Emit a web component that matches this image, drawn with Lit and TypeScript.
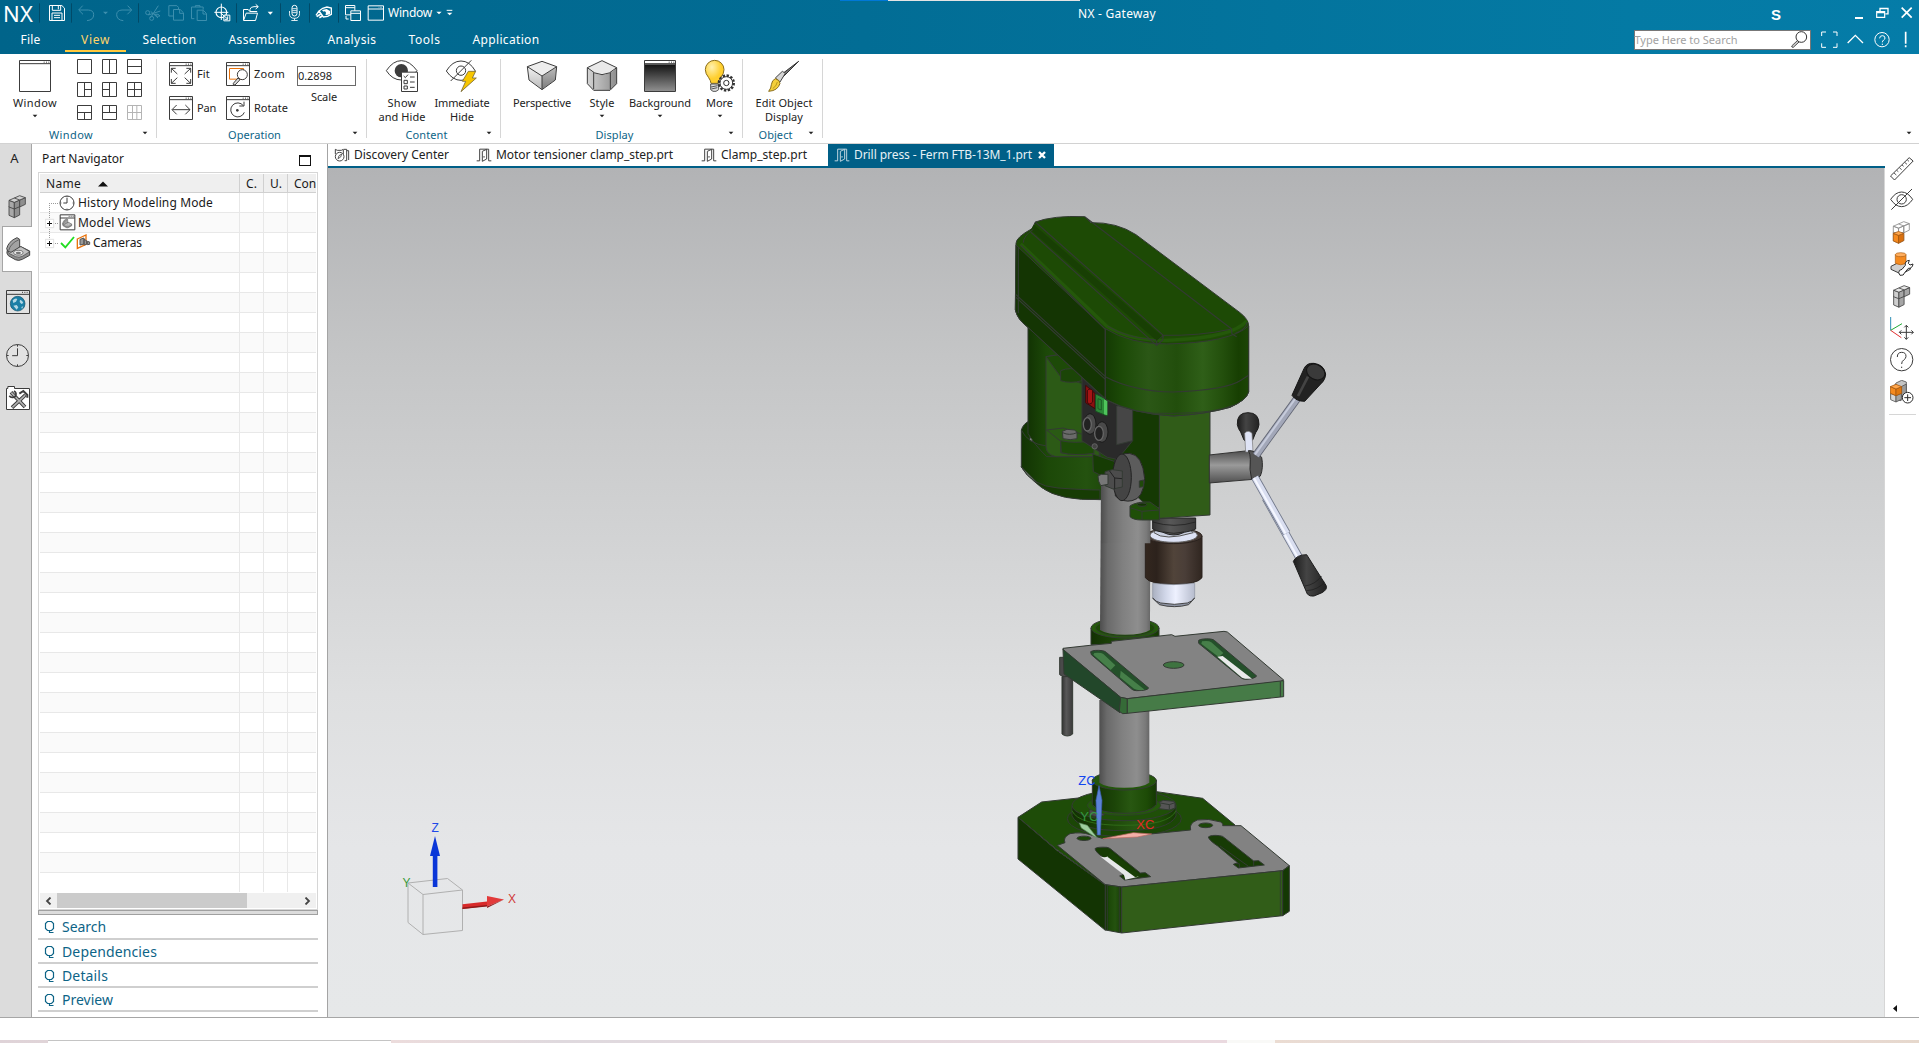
import { LitElement, html, svg, css, nothing } from "lit";
import { customElement, property } from "lit/decorators.js";

/* Single line of text whose tracking is tuned so that it fills a given width. */
@customElement("ui-text")
class UiText extends LitElement {
  @property() text = "";
  @property({ type: Number }) w = 0;
  static styles = css`
    :host { display: inline-block; white-space: pre; line-height: 1; flex: none; }
    .run { display: inline-block; }
  `;
  render() {
    return html`<span class="run">${this.text}</span>`;
  }
  updated() {
    const run = this.renderRoot.querySelector(".run") as HTMLElement;
    run.style.letterSpacing = "0px";
    if (!this.w) return;
    const gap = (this.w - run.getBoundingClientRect().width) / this.text.length;
    run.style.letterSpacing = `${gap.toFixed(3)}px`;
  }
}

const t = (text: string, w = 0) => html`<ui-text .text=${text} .w=${w}></ui-text>`;

/* Icons are drawn on a grid of three units per pixel. */
const icon = (x: number, y: number, w: number, h: number, body: unknown) =>
  html`<svg width=${w / 3} height=${h / 3} viewBox="${x} ${y} ${w} ${h}" fill="none">${body}</svg>`;

const ln = (d: string, c = "#3c3c3c", w = 3, f = "none") =>
  svg`<path d=${d} stroke=${c} stroke-width=${w} fill=${f} />`;

const down = (c: string, w = 14) =>
  icon(0, 0, 18, 12, svg`<path d="M${9 - w / 2} 2h${w}l${-w / 2} 8z" fill=${c} />`);

const frame = (x: number, y: number, s: number) => svg`
  <path d="M${x + 1.5} ${y + 1.5}h${s - 3}v${s - 3}h${3 - s}z M${x} ${y + 11}h${s}" stroke="#3c3c3c" stroke-width="3" fill="#fff" />
  <path d="M${x + s - 22} ${y + 6.5}h18" stroke="#3c3c3c" stroke-width="3" stroke-dasharray="3 4" />`;

/* ---------- quick access bar ---------- */
const W = "#ffffff";
const D = "#3d8fae";
const quick: { x: number; w: number; body: unknown }[] = [
  { x: 114, w: 9, body: ln("M118.500 10v58", "#014a68") },
  { x: 144, w: 54, body: svg`${ln("M148.500 16.500h37l8 8v37h-45z", W)}${ln("M157 17v14h25v-14 M175 18v10", W)}${ln("M156 61v-22h30v22 M162 46h18 M162 53h18", W)}` },
  { x: 210, w: 9, body: ln("M214.500 10v58", "#014a68") },
  { x: 231, w: 54, body: svg`${ln("M248 17l-12 13l13 13 M237 30h28q16 1 16 14q0 16-20 18", D)}` },
  { x: 306, w: 21, body: svg`<path d="M309 35h15l-7.500 8z" fill=${D} />` },
  { x: 345, w: 54, body: ln("M383 17l12 13l-13 13 M394 30h-28q-16 1-16 14q0 16 20 18", D) },
  { x: 411, w: 9, body: ln("M415.500 10v58", "#014a68") },
  { x: 432, w: 54, body: svg`${ln("M451 54l24-37 M481 33l-36 12 M452 34l22 20", D)}<circle cx="455" cy="55" r="6" stroke=${D} stroke-width="3" /><circle cx="443" cy="38" r="6" stroke=${D} stroke-width="3" /><path d="M463 43q14-3 17 5q-8 4-17-5" stroke=${D} stroke-width="3" />` },
  { x: 501, w: 54, body: ln("M520 48h-13.500v-31h24l5 5v5 M520.500 28.500h20l10 10v22h-30z M539 29v11h11", D) },
  { x: 570, w: 54, body: ln("M583 56h-8.500v-35h35v8 M586 21v-4h14v4 M591.500 30.500h18l10 10v21h-28z M609 31v11h10", D) },
  { x: 639, w: 54, body: svg`<circle cx="664" cy="37" r="16" stroke=${W} stroke-width="3.500" />${ln("M664 11v49 M643 37h42", W)}${ln("M671.500 45.500h18v17h-18z", W, 3, "#04688e")}${ln("M661 38l22 19 M683 49v9h-9", W)}` },
  { x: 705, w: 9, body: ln("M709.500 10v58", "#014a68") },
  { x: 726, w: 54, body: ln("M730.500 61.500v-33h14l5 6h22 M730.500 61.500h36l6-22h-34l-7 20 M750 34v-6q2-8 12-8h12 M767 13l8 7l-8 7", W) },
  { x: 801, w: 21, body: svg`<path d="M803 35h16l-8 9z" fill="#fff" />` },
  { x: 837, w: 9, body: ln("M841.500 10v58", "#014a68") },
  { x: 861, w: 45, body: svg`<rect x="876" y="16" width="15" height="32" rx="7.500" stroke="#fff" stroke-width="3" />${ln("M868.500 33v8q0 14 15 14t15-14v-8 M883.500 55v6 M874 61.500h19 M877 26h13 M877 32h13 M877 38h13", W, 2.6)}` },
  { x: 924, w: 9, body: ln("M928.500 10v58", "#014a68") },
  { x: 942, w: 57, body: svg`<path d="M948 46l8-12M957 33l11-8l13-4l13 3v19l-11 6l-13 2z" stroke="#fff" stroke-width="4" /><path d="M950 50l12-8 M958 53l10-6" stroke="#fff" stroke-width="5" /><path d="M966 30l14-3l10 6v10l-12 3z" fill="#fff" /><circle cx="973" cy="39" r="5" fill="#04688e" />` },
  { x: 1011, w: 9, body: ln("M1015.500 10v58", "#014a68") },
  { x: 1032, w: 54, body: svg`${ln("M1036.500 16.500h28v28h-28z M1036 23h28", W)}${ln("M1052.500 32.500h29v29h-29z M1052 40h29", W, 3, "#04688e")}${ln("M1038 48v9h8", W)}` },
  { x: 1101, w: 54, body: svg`${ln("M1104.500 17.500h46v43h-46z M1104 27h46", W)}<path d="M1136 22h12" stroke="#fff" stroke-width="2" stroke-dasharray="2 2" />` },
];

const tabs: { label: string; cell: number; w: number; on?: boolean }[] = [
  { label: "File", cell: 61, w: 20 },
  { label: "View", cell: 61, w: 29, on: true },
  { label: "Selection", cell: 87, w: 54 },
  { label: "Assemblies", cell: 98, w: 67 },
  { label: "Analysis", cell: 82, w: 49 },
  { label: "Tools", cell: 63, w: 32 },
  { label: "Application", cell: 100, w: 67 },
];

/* ---------- ribbon icons ---------- */
const layouts: { d: string; c?: string }[] = [
  { d: "" }, { d: "M22.500 0v45" }, { d: "M0 22.500h45" },
  { d: "M22.500 0v45 M22 22.500h23" }, { d: "M22.500 0v45 M0 22.500h22" }, { d: "M22.500 0v45 M0 22.500h45" },
  { d: "M0 22.500h45 M22.500 22v23" }, { d: "M0 22.500h45 M22.500 0v22" },
  { d: "M0 22.500h45 M16.500 0v45 M29.500 0v45", c: "#b4b4b4" },
];
const layoutIcon = (l: { d: string; c?: string }) =>
  icon(0, 0, 45, 45, ln(`M1.500 1.500h42v42h-42z ${l.d}`, l.c ?? "#3c3c3c"));

const icWindow = icon(54, 177, 102, 102, frame(57, 180, 96));
const icFit = icon(504, 183, 78, 78, svg`${frame(507, 186, 72)}${ln("M514 218v-13h13 M514 205l18 17 M572 218v-13h-13 M572 205l-18 17 M514 237v13h13 M514 250l18-17 M572 237v13h-13 M572 250l-18-17")}`);
const icPan = icon(504, 285, 78, 78, svg`${frame(507, 288, 72)}${ln("M517 329h53 M530 315l-14 14l14 14 M556 315l14 14l-14 14")}`);
const icZoom = icon(675, 183, 78, 78, svg`${frame(678, 186, 72)}${ln("M688.500 205.500h42v32h-42z", "#e8720c")}<circle cx="727" cy="224" r="15" fill="#fff" stroke="#3c3c3c" stroke-width="3" />${ln("M714 234l-14 16q-2 6 5 5l15-16z", "#3c3c3c", 3, "#ddd")}`);
const icRotate = icon(675, 285, 78, 78, svg`${frame(678, 288, 72)}${ln("M730 317a21 21 0 1 0 3 20 M732 305v13h-14")}<circle cx="712" cy="331" r="4" fill="#3c3c3c" />`);
const icShow = icon(1155, 177, 102, 102, svg`${ln("M1159 212q20-30 45-30t47 30q-20 28-47 28t-45-28z")}<circle cx="1204" cy="212" r="20" fill="#3c3c3c" />
  ${ln("M1204.500 216.500h48v58h-48z", "#3c3c3c", 3, "#fff")}${ln("M1211 228l5 5l8-9 M1212 241h10v10h-10z M1212 258h10v9h-10z M1230 231h14 M1230 246h14 M1230 262h14")}`);
const icHide = icon(1332, 177, 102, 102, svg`${ln("M1336 213q18-30 44-30t43 30q-18 28-43 28t-44-28z")}<circle cx="1380" cy="212" r="14" stroke="#3c3c3c" stroke-width="3" />${ln("M1349 243l62-62")}
  <path d="M1402 214h22l-10 20h12l-46 41l14-31h-10z" fill="#f7c600" stroke="#7a6a3a" stroke-width="2.500" />`);

const grad = (id: string, a: string, b: string, x2 = 0, y2 = 1) =>
  svg`<linearGradient id=${id} x1="0" y1="0" x2=${x2} y2=${y2}><stop offset="0" stop-color=${a} /><stop offset="1" stop-color=${b} /></linearGradient>`;

const icPersp = icon(135, 177, 102, 102, svg`<defs>${grad("pa", "#f2f2f2", "#b9b9b9")}${grad("pb", "#bdbdbd", "#7c7c7c")}</defs>
  <path d="M143 200l43 28v40l-38-29z" fill="url(#pa)" /><path d="M186 228l44-28l-5 40l-39 28z" fill="url(#pb)" /><path d="M143 200l43-16l44 16l-44 28z" fill="#ededed" />
  ${ln("M142 200l44-16l44 16l-4 40l-40 29l-39-29z M142 200l44 28l44-28 M186 228v40")}`);
const icStyle = icon(315, 174, 102, 102, svg`<defs>${grad("sa", "#d4d4d4", "#8d8d8d", 1, 0)}</defs>
  <path d="M322 200q44 42 88 0v48l-20 20h-49l-19-20z" fill="url(#sa)" /><path d="M322 200l44-21l44 21q-44 42-88 0z" fill="#e9e9e9" />
  ${ln("M322 200l44-21l44 21v48l-20 20h-49l-19-20z M322 200q44 42 88 0 M341 214v50 M391 214v50")}`);
const icBack = icon(489, 174, 102, 102, svg`<defs>${grad("ba", "#121212", "#8f8f8f")}</defs>${frame(492, 177, 96)}<path d="M495 190h90v80h-90z" fill="url(#ba)" />`);
const icMore = icon(669, 174, 102, 102, svg`<defs><radialGradient id="ma" cx="0.35" cy="0.3"><stop offset="0" stop-color="#fff1b0" /><stop offset="1" stop-color="#ffcf2e" /></radialGradient></defs>
  <path d="M704 178a28 28 0 0 1 28 28q0 12-10 24q-6 8-7 17h-22q-1-9-7-17q-10-12-10-24a28 28 0 0 1 28-28z" fill="url(#ma)" stroke="#8a6d1a" stroke-width="3" />
  ${ln("M692 249h24v17l-8 5h-9l-7-5z M693 258l20-4 M694 264l18-4", "#555", 3, "#ddd")}
  <circle cx="739" cy="246" r="22" stroke="#333" stroke-width="8" stroke-dasharray="7 4.520" fill="none" /><circle cx="739" cy="246" r="19" fill="#fff" stroke="#333" stroke-width="3" /><circle cx="739" cy="246" r="8" stroke="#333" stroke-width="3" />`);
const icBrush = icon(861, 177, 102, 102, svg`<path d="M956 184l-58 58l-9-7z" fill="#777" stroke="#333" stroke-width="3" /><path d="M916 220l-16 26l-14-12l21-20z" fill="#d5d5d5" stroke="#444" stroke-width="3" />
  <path d="M886 236q14 4 14 14q-6 22-34 24q8-10 8-20q2-14 12-18z" fill="#f4cf3a" stroke="#8a6d1a" stroke-width="3" /><path d="M878 266q12-8 14-20" stroke="#a98a1a" stroke-width="2.500" />`);

/* ---------- block-shaped part icons ---------- */
const cubes = (s: number, top: string, left: string, right: string, low: string, lowTop = low) => svg`<g transform="scale(${s})" stroke="#444" stroke-width="2.600" stroke-linejoin="round">
  <path d="M3 34l16 6v28l-16-7z" fill=${low} /><path d="M19 40l16-6v26l-16 8z" fill=${lowTop} />
  <path d="M3 16l16 6v20l-16-6z" fill=${left} /><path d="M19 22l16-7v20l-16 7z" fill=${right} />
  <path d="M35 15l17-7v20l-17 8z" fill=${right} /><path d="M3 16l32-14l17 6l-33 14z" fill=${top} /><path d="M19 9l16 6" /></g>`;

const bracket = svg`<g stroke="#444" stroke-width="3" stroke-linejoin="round">
  <path d="M21 330Q17 340 24 347L45 359Q55 364 66 358L88 346V333L62 320z" fill="#8e8e8e" />
  <path d="M24 330Q20 336 26 340L46 350Q56 354 66 349L88 335L62 320z" fill="#c2c2c2" stroke-width="2" />
  <path d="M19 326Q24 304 50 293L58 298V321L32 337Q20 336 19 326z" fill="#a2a2a2" /><path d="M25 332Q30 310 56 299" fill="none" stroke-width="2" />
  <ellipse cx="54" cy="338" rx="14" ry="7" fill="#ececec" stroke-width="2" /><ellipse cx="54" cy="339" rx="8" ry="3.500" fill="#777" stroke="none" /></g>`;

const railPart = icon(0, 0, 57, 72, cubes(1, "#d0d0d0", "#a8a8a8", "#8f8f8f", "#a8a8a8", "#8f8f8f"));
const railBracket = icon(14, 291, 78, 75, bracket);
const railWeb = icon(15, 450, 78, 78, svg`${ln("M19.500 454.500h69v69h-69z M18 466h72", "#3c3c3c", 3, "#e2e2e2")}<path d="M66 460h22" stroke="#3c3c3c" stroke-width="3" stroke-dasharray="3 4" />
  <circle cx="53" cy="494" r="22" fill="#1b7fa6" stroke="#0e4f6a" stroke-width="2" /><path d="M38 484q8-8 14-4l-4 8l-8 4z M60 482q8 2 10 10l-6 3l-5-6z M40 500l10-2l5 7l-5 7z M64 504l6-2l-4 8z" fill="#b4d8e5" />`);
const railClock = icon(15, 612, 75, 75, svg`<circle cx="52.500" cy="649.500" r="33" fill="#e2e2e2" stroke="#3c3c3c" stroke-width="3" />${ln("M52.500 628v22h-16 M52.500 617v6 M52.500 676v6 M20 649.500h6 M79 649.500h6")}`);
const railTools = icon(15, 738, 78, 78, svg`${ln("M19.500 748.500h4v-6h20v6h45v63h-69z", "#3c3c3c", 3, "#fff")}
  <path d="M33 760l42 44 M76 768l-40 38" stroke="#3c3c3c" stroke-width="11" /><path d="M34 761l40 42 M75 769l-38 36" stroke="#b0b0b0" stroke-width="5" />
  <path d="M28 770a12 12 0 0 0 18 2a12 12 0 0 0-4-16" stroke="#3c3c3c" stroke-width="5" /><path d="M58 764l12-8l12 12v8" stroke="#3c3c3c" stroke-width="6" />`);

/* ---------- file tab icons ---------- */
const door = (c: string) => icon(0, 0, 48, 42, svg`${ln("M2 38.500h9v-35h27v35h8", c, 3)}${ln("M19 10l13-6v29l-13 7z M24 24v5", c, 3)}`);
const compass = icon(0, 0, 48, 42, svg`${ln("M4 4l6 3h12l6-3v14 M4 4v14 M30 4h8v34h-6 M38 8h6v28", "#444", 3)}<circle cx="17" cy="26" r="13" stroke="#444" stroke-width="3" fill="#fff" />${ln("M12 32l3-9l8-5l-3 9z", "#444", 2.5)}`);

/* ---------- tree icons ---------- */
const DOT = "#9a9a9a";
const twig = (up: boolean, box: boolean, below: boolean) => icon(0, 0, 42, 60, svg`
  ${up ? svg`<path d="M13.500 0v30" stroke=${DOT} stroke-width="3" stroke-dasharray="3 3" />` : nothing}
  ${below ? svg`<path d="M13.500 30v30" stroke=${DOT} stroke-width="3" stroke-dasharray="3 3" />` : nothing}
  <path d="M12 31.500h30" stroke=${DOT} stroke-width="3" stroke-dasharray="3 3" />
  ${box ? svg`<path d="M1 19h25v25h-25z" fill="#fff" stroke="#d4d4d4" stroke-width="2" />${ln("M6 31.500h15 M13.500 24v15", "#111", 3)}` : nothing}`);
const icHistory = icon(175, 164, 51, 48, svg`<circle cx="199" cy="188" r="21" fill="#fff" stroke="#3c3c3c" stroke-width="3" />${ln("M199 173v15h-11 M199 168v3 M199 205v3 M179 188h3 M216 188h3")}`);
const icViews = icon(175, 224, 51, 51, svg`${ln("M178.500 226.500h44v45h-44z M178 236h44", "#3c3c3c", 3, "#fff")}<path d="M204 231h16" stroke="#3c3c3c" stroke-width="2.600" stroke-dasharray="3 3" /><g transform="translate(178 121) scale(0.4)">${bracket}</g>`);
const icCamera = icon(175, 284, 96, 51, svg`<path d="M181 311l13 13l26-31" stroke="#22dd22" stroke-width="5.500" />
  <path d="M230 299l26-12v28l-26 12z" stroke="#e8720c" stroke-width="4" fill="#fff" /><path d="M238 300l12-4v18l-12 3z M250 300l8 4v11l-8 2z M260 306l7 2v7l-7 1z" fill="#999" stroke="#555" stroke-width="3" />`);

/* ---------- right toolbar icons ---------- */
const O = "#f58a1f";
const side: { gap: number; body: unknown }[] = [
  { gap: 0, body: svg`<g transform="translate(0 -51)">${ln("M1.500 108l56-55l12 10l-56 57z")}${ln("M12 99l7 6 M20 91l5 4 M28 83l7 6 M36 75l5 4 M44 67l7 6 M52 60l5 4", "#3c3c3c", 2.5)}</g>` },
  { gap: 24, body: svg`${ln("M2 31q15-22 33-22t33 22q-15 22-33 22t-33-22z M4 62l62-62")}<circle cx="35" cy="31" r="14" stroke="#3c3c3c" stroke-width="3" />` },
  { gap: 33, body: svg`<g transform="translate(7 0)"><g opacity="0.6">${cubes(0.98, "none", "none", "none", "none")}</g><g transform="scale(0.98)" stroke="#a85a10" stroke-width="2.500" stroke-linejoin="round"><path d="M3 38l16 6v24l-16-7z" fill=${O} /><path d="M19 44l16-6v22l-16 8z" fill="#d9700f" /><path d="M3 38l16-6l16 6l-16 6z" fill="#ffa64d" /></g></g>` },
  { gap: 24, body: svg`<path d="M3 43l18-9h28l12 8v10l-22 12h-10l-26-12z" fill="#d0d0d0" stroke="#3c3c3c" stroke-width="3" /><path d="M16 8v26q16 9 32 0v-26z" fill=${O} stroke="#a85a10" stroke-width="2" /><ellipse cx="32" cy="8" rx="16" ry="6" fill="#ffae5e" stroke="#a85a10" stroke-width="2" />
    <path d="M26 62q0-9 10-10l10-12q-2-14 12-15l-3 9l5 5l9-3q-2 14-14 13l-11 13q-2 10-14 8z" fill="#fff" stroke="#2c2c2c" stroke-width="3" />` },
  { gap: 27, body: svg`<g transform="translate(8 0)">${cubes(0.98, "#e6e6e6", "#cfcfcf", "#a6a6a6", "#cfcfcf", "#a6a6a6")}</g>` },
  { gap: 26, body: svg`${ln("M2 0v40", "#2f8fb5")}${ln("M2 40l34-20", "#1faa35")}${ln("M2 40l32 22", "#e23030")}${ln("M49 25v42 M28 46h42 M43 31l6-6l6 6 M43 61l6 6l6-6 M34 40l-6 6l6 6 M64 40l6 6l-6 6")}` },
  { gap: 24, body: svg`<circle cx="35" cy="35" r="33.500" stroke="#3c3c3c" stroke-width="3" />${ln("M22 27q0-14 13-14t13 12q0 7-7 11q-6 4-6 12 M35 56v4")}` },
  { gap: 24, body: svg`<g stroke="#555" stroke-width="2.500" stroke-linejoin="round"><path d="M18 9l17-8l14 5v34l-16 22l-30-6v-20z" fill="#c4c4c4" /><path d="M34 20l15-8v30l-15 8z" fill="#9a9a9a" /><path d="M2 40l16 7v19l-16-7z" fill="#d8d8d8" /><path d="M18 47l16-7v18l-16 8z" fill="#a4a4a4" /></g>
    <g stroke="#a85a10" stroke-width="2.500" stroke-linejoin="round"><path d="M1 20l17 7v20l-17-7z" fill=${O} /><path d="M18 27l17-7v20l-17 7z" fill="#e07810" /><path d="M1 20l17-7l17 7l-17 7z" fill="#ffa64d" /></g><circle cx="53" cy="53" r="16" fill="#fff" stroke="#2c2c2c" stroke-width="3" />${ln("M53 43v20 M43 53h20", "#2c2c2c")}` },
];

/* ---------- machine model ---------- */
const E = "#333a33";
const pl = (d: string, f: string, s = E, w = 3) => svg`<path d=${d} fill=${f} stroke=${s} stroke-width=${w} stroke-linejoin="round" />`;
const hg = (id: string, stops: [number, string][]) =>
  svg`<linearGradient id=${id}>${stops.map(([o, c]) => svg`<stop offset=${o} stop-color=${c} />`)}</linearGradient>`;

const modelDefs = svg`<defs>
  ${hg("col", [[0, "#4e4e4e"], [0.15, "#6a6a6a"], [0.45, "#808080"], [0.75, "#8e8e8e"], [0.92, "#7a7a7a"], [1, "#666"]])}
  ${hg("ring", [[0, "#123003"], [0.35, "#1c4508"], [0.6, "#285711"], [0.85, "#1d4b06"], [1, "#143803"]])}
  ${hg("front", [[0, "#143a03"], [0.12, "#1c4a07"], [0.3, "#2b5716"], [0.5, "#224e0c"], [0.68, "#2f5f18"], [0.82, "#234f0c"], [0.93, "#173f02"], [1, "#1c4506"]])}
  ${hg("motor", [[0, "#123303"], [0.25, "#1c4808"], [0.6, "#24520f"], [1, "#173d05"]])}
  ${hg("chuck", [[0, "#33271f"], [0.2, "#2c221c"], [0.5, "#51443a"], [0.7, "#4a3e38"], [1, "#302620"]])}
  ${hg("steel", [[0, "#aab0c0"], [0.3, "#d0d6e8"], [0.55, "#eef1ff"], [1, "#b6bccd"]])}
  ${hg("grip", [[0, "#1c1c1c"], [0.4, "#444"], [1, "#222"]])}
  ${hg("quill", [[0, "#333"], [0.4, "#585858"], [1, "#3a3a3a"]])}
  <linearGradient id="shaft" x1="0" y1="0" x2="0" y2="1"><stop offset="0" stop-color="#4d4d4d" /><stop offset="0.45" stop-color="#9a9a9a" /><stop offset="1" stop-color="#505050" /></linearGradient>
</defs>`;

const base = svg`<g transform="translate(1000 740) scale(0.333333)">
  ${pl("M54 232L125 186L235 174L470 155L608 175L705 255L316 435L172 330L54 232z", "#1e4c08")}
  ${pl("M54 232L172 332L316 435V571L54 357z", "#133403")}
  <ellipse cx="373" cy="236" rx="171" ry="54" fill="#1b4606" stroke=${E} stroke-width="3" />
  <path d="M216 196v32q20 44 156 44t156-44v-32z" fill="url(#ring)" stroke=${E} stroke-width="3" />
  <path d="M216 212q20 44 156 44t156-44" stroke="#2f6a18" stroke-width="3" fill="none" />
  <ellipse cx="372" cy="196" rx="156" ry="46" fill="#1f4f08" stroke=${E} stroke-width="3" />
  ${pl("M476 187l14-6l32 3l3 6v14l-16 6l-32-4z", "#555")}${pl("M476 188l32 6l17-6 M508 194v15", "none")}
  ${pl("M268 210l24-5l20 4v16l-20 6l-24-6z", "#4a4a4a")}
  <ellipse cx="372" cy="196" rx="110" ry="30" fill="#24590c" stroke=${E} stroke-width="2" />
  <path d="M277 120v74q20 26 96 26t96-26v-74z" fill="url(#ring)" stroke=${E} stroke-width="3" />
  <ellipse cx="373" cy="122" rx="96" ry="28" fill="#23560b" stroke=${E} stroke-width="3" />
  <path d="M298-120h150v248q-20 15-75 15t-75-15z" fill="url(#col)" />
  ${pl("M172 316L195 308Q188 292 210 281Q245 275 270 284L310 296L572 270Q566 250 592 240Q625 234 662 246Q672 252 668 257L723 257L868 377L848 392L365 441L316 434z", "#828282")}
  <ellipse cx="252" cy="295" rx="21" ry="6.500" fill="#1c4707" stroke=${E} stroke-width="3" /><ellipse cx="617" cy="256" rx="21" ry="7" fill="#1c4707" stroke=${E} stroke-width="3" />
  ${pl("M285 326q6-6 36-4q8 2 12 6l88 71l15-1l16 12l-78 10l-15-12l12-5l-60-50q-24-16-26-27z", "#173b05")}
  <path d="M300 349q16 6 24-1l92 62l-40 9l-4-14z" fill="#e6e7e9" /><path d="M331 332l85 70v7l-10 3l-84-62z" fill="#183f05" />
  ${pl("M625 291q8-7 34-4q10 1 14 6l88 70l15-1l17 13l-78 9l-15-11l13-5l-60-50q-26-17-28-27z", "#173b05")}
  ${pl("M660 318l84 60 M708 371h10v12 M761 363v14", "none")}
  ${pl("M316 434L365 441V579L316 570z", "url(#motor)")}${pl("M365 441L848 392V527L365 579z", "#315d18")}${pl("M848 392L868 377V514L848 527z", "#143803")}${pl("M358 440v138 M841 393v134 M322 436v134", "none", E, 2.5)}
</g>`;

const mid = svg`<g transform="translate(1000 500) scale(0.333333)">
  ${pl("M179 472h24v58h-14l-10-6z", "#4a4a4a")}${pl("M186 530h32v172q-6 6-16 6t-16-6z", "url(#quill)")}
  <path d="M273 384v50h204v-50z" fill="url(#ring)" stroke=${E} stroke-width="3" />
  <ellipse cx="375" cy="384" rx="102" ry="30" fill="#255a0c" stroke=${E} stroke-width="3" />
  <ellipse cx="375" cy="384" rx="88" ry="24" fill="#1c4906" stroke=${E} stroke-width="2" />
  <path d="M303-60h148l-1 450q-20 14-75 14t-75-14z" fill="url(#col)" />
  ${pl("M189 445L270 436L334 430V424L515 404L525 409L672 394L682 396L851 540L840 545L382 596L362 592L189 450z", "#838383")}
  ${pl("M189 448L362 592L360 638L192 522z", "#22472a")}
  ${pl("M362 592L382 596L382 640L368 641L358 634z", "#356a37")}${pl("M382 596L851 542L851 590L382 640z", "#467b47")}${pl("M841 545v46", "none")}
  ${pl("M272 455q10-6 36-3q8 2 12 6l126 106q-4 8-36 8q-10 0-14-4L274 464z", "#24502a")}
  <path d="M283 459q20-2 27 3l36 34l-14 14l-52-46z M362 512l72 57q-20 4-32-3l-42-34z" fill="#467f49" />
  ${pl("M596 421q10-6 36-4q8 1 12 5l126 106q-6 8-32 10q-10 0-14-4L596 430z", "#24502a")}
  <path d="M606 424q20-3 28 3l36 32l-14 12l-52-40z" fill="#467f49" /><path d="M652 470l16-2l88 68q-18 2-30-3z" fill="#e9eaea" />
  <ellipse cx="521" cy="495" rx="31" ry="10" fill="#3e7340" stroke=${E} stroke-width="3" />
  <path d="M436 108v125q14 20 85 20t85-20v-125z" fill="url(#chuck)" stroke="#2a221e" stroke-width="3" />
  <ellipse cx="521" cy="108" rx="85" ry="23" fill="#463a34" stroke="#2a221e" stroke-width="3" />
  <ellipse cx="521" cy="106" rx="71" ry="21" fill="#dde2f4" stroke="#666" stroke-width="3" /><path d="M462 98q30 26 118 0l-8-6h-106z" fill="#c9cfdf" stroke="#555" stroke-width="3" />
  <path d="M458 54h129v33q-12 6-34 10q-32 16-64 0q-22-4-31-10z" fill="url(#quill)" stroke="#222" stroke-width="3" />
  ${pl("M458 66q64 20 129 0 M490 96q32 8 62 0", "none", "#222", 2.5)}
  <path d="M458 250q63 8 126 0v44q-6 12-22 18q-40 14-80 0q-20-8-24-18z" fill="url(#steel)" stroke="#8d92a0" stroke-width="2" />
  <path d="M458 294q10 12 24 15q42 8 80 0q14-4 22-15l-18 20q-42 12-88 0z" fill="#8d93a3" stroke="#444" stroke-width="3" />
  <path d="M797-6l100 178" stroke="#6f7688" stroke-width="24" /><path d="M797-6l100 178" stroke="#d9def0" stroke-width="19" /><path d="M794-4l100 178" stroke="#f5f7ff" stroke-width="6" />
  ${pl("M880 184q10-20 40-20l58 92q6 12-12 22l-24 10q-14 2-20-6z", "url(#grip)", "#1c1c1c")}${pl("M915 258q30-4 50-30 M920 272q34-2 54-26", "none", "#1c1c1c", 2)}
</g>`;

const head = svg`<g transform="translate(1000 200) scale(0.333333)">
  ${pl("M64 690q6-20 26-28v60l300 40v136l-90 1q-130-2-176-38l-60-60z", "url(#motor)")}
  ${pl("M64 800q30 58 110 64t126 6v28q-120 6-176-36q-50-40-60-62z", "#173c04")}
  ${pl("M84 370H300V770H140Q100 730 84 700z", "url(#motor)")}${pl("M64 690q20 42 76 48", "none")}
  <path d="M303 820h148v210h-148z" fill="url(#col)" />
  ${pl("M138 470l50-8l110 100v208h-130q-30-6-30-30z", "#2c5a16")}
  ${pl("M138 470l40-6l120 120l-60-36l-58-20z", "#1d4a08")}${pl("M182 512q26-12 64 0v30q-34 10-64 0z", "#1b4507")}
  ${pl("M140 690l50-6l90 30v46q-60 8-98-2v-34z", "#2a5a14")}${pl("M182 722q40 10 100 0v38q-60 8-98-2z", "#1d4a08")}${pl("M187 694l14-6l22 2l8 6v20q-20 6-42 0z", "#6a6a6a")}${pl("M188 698q20 10 43 0", "none")}
  ${pl("M278 762L360 790V830H310L280 815z", "#163c04")}
  ${pl("M246 530L400 600V722L382 742Q380 762 352 778L322 772L246 722z", "#2a2a2a")}${pl("M350 618l48-2v106l-48 12z", "#464646")}
  ${pl("M257 556l28 24v46l-28-18z", "#8c1010", "#3a0a0a")}${pl("M262 572q8-10 16 0v34q-10 12-16 0z", "#a41414", "#3a0a0a")}${pl("M287 582l34 16v50l-34-14z", "#2c8a38", "#1c4d22")}<path d="M312 598l10 4v44l-10-3z" fill="#4fc45c" /><path d="M294 596l10 4v30l-10-4z" fill="none" stroke="#1c5d26" stroke-width="3" />
  <ellipse cx="270" cy="672" rx="18" ry="31" fill="#4a4a4a" stroke="#1a1a1a" stroke-width="3" /><ellipse cx="262" cy="673" rx="12" ry="20" fill="#222" stroke="#666" stroke-width="4" />
  <ellipse cx="306" cy="696" rx="18" ry="31" fill="#4a4a4a" stroke="#1a1a1a" stroke-width="3" /><ellipse cx="297" cy="700" rx="13" ry="21" fill="#222" stroke="#666" stroke-width="4" />
  <circle cx="284" cy="739" r="8" fill="#444" stroke="#777" stroke-width="2" />
  ${pl("M398 600H480V925L440 915L400 880L352 778L382 742L398 722z", "#153903")}
  ${pl("M478 630H630V945L478 955z", "#305c18")}
  <path d="M628 765L745 752Q772 770 760 838L628 849z" fill="url(#shaft)" stroke="#333" stroke-width="3" />
  ${pl("M712 674q-2-36 32-36q34 0 33 36q-2 14-10 24l-9 22q-14 10-26 0l-10-24q-8-10-10-22z", "url(#grip)", "#1c1c1c")}
  <path d="M734 700q10-12 22 0l3 56h-22z" fill="#dfe4f6" stroke="#777" stroke-width="2" />
  ${pl("M745 752q20-2 40 20q6 32-4 56q-8 10-26 10q-8-30-4-60q0-18-6-26z", "#555", "#2a2a2a")}
  <path d="M768 766L900 584" stroke="#5e6270" stroke-width="24" /><path d="M768 766L900 584" stroke="#a2a7b8" stroke-width="19" /><path d="M765 764L896 582" stroke="#c6cbdb" stroke-width="6" />
  <path d="M765 832L860 1000" stroke="#6f7688" stroke-width="24" /><path d="M765 832L860 1000" stroke="#d9def0" stroke-width="19" /><path d="M762 834L856 1000" stroke="#f5f7ff" stroke-width="6" />
  ${pl("M876 586L912 506Q920 488 942 490Q972 494 977 522Q976 540 962 552L914 604Q888 604 876 586z", "#222", "#151515")}<ellipse cx="947" cy="516" rx="29" ry="22" transform="rotate(28 947 516)" fill="#3a3a3a" stroke="#151515" stroke-width="3" /><path d="M924 530l-30 58" stroke="#444" stroke-width="8" />
  <path d="M344 780q12-20 44-20q40 4 46 76q-4 60-38 66q-26 6-50-14z" fill="#5c5c5c" stroke="#2a2a2a" stroke-width="3" /><ellipse cx="366" cy="832" rx="28" ry="70" fill="#444" stroke="#222" stroke-width="3" />
  ${pl("M315 815l22-6l30 4v48l-28 6l-24-10z", "#4c4c4c")}${pl("M328 812l16 22l22 2 M344 834v32", "none", "#222")}${pl("M294 828l10-5h20v30l-22 4q-8-12-8-29z", "#777")}${pl("M418 843l13-3v20l-13 2z", "#1f4a0a")}
  ${pl("M390 918q20-14 60-12l28 20v34h-54q-24 0-34-10z", "#1f4f08")}${pl("M392 924l34 10l52-4 M426 934v26", "none")}<ellipse cx="426" cy="914" rx="14" ry="5" fill="#133403" stroke=${E} stroke-width="3" />
  ${pl("M48 130Q48 112 96 86L106 66Q160 46 254 50L272 68Q350 66 408 104L720 338Q746 358 746 378V576Q740 600 690 622Q620 642 520 648Q400 642 316 598L84 382Q52 358 46 330z", "#1d4a05")}
  ${pl("M48 135L316 388V596L84 382Q52 358 46 330z", "#143503")}
  <path d="M316 386Q390 432 500 432Q690 428 746 378V576Q740 600 690 622Q620 642 520 648Q400 642 316 598z" fill="url(#front)" stroke=${E} stroke-width="3" />
  <path d="M62 132L322 380Q400 428 520 420Q700 412 741 362" fill="none" stroke="#24580a" stroke-width="10" />
  ${pl("M62 136L316 388 M106 66L490 406L488 420L470 436L92 96 M470 436V420L490 406 M254 50L694 386L696 402L710 410", "none", E, 3.5)}
  <path d="M102 74L486 408L470 422L92 90z" fill="#183f04" />
  <path d="M70 128Q70 108 100 88 M322 378Q380 414 468 420 M490 406Q600 408 690 388 M706 400Q736 390 742 366" stroke=${E} stroke-width="3" fill="none" />
  ${pl("M48 284L316 530Q400 574 520 576Q680 570 724 540L746 526 M48 292L316 538 M55 140V340 M316 388V596", "none", E, 3.5)}
  ${pl("M320 600Q400 646 520 640Q640 640 700 616", "none", E, 2.5)}
</g>`;

const csys = svg`<g transform="translate(1000 740) scale(0.333333)" font-family="Liberation Sans, Arial, sans-serif" font-size="39">
  <path d="M297 137l9 44l-5 104h-9l-4-104z" fill="#5c82d6" stroke="#3a5cb0" stroke-width="2" /><path d="M291 293L262 256L238 249L244 264L284 290z" fill="#9fcf9f" stroke="#5a8a5a" stroke-width="2" /><path d="M308 296L400 278L455 282L412 291z" fill="#f4b0a8" stroke="#c06a64" stroke-width="2" />
  <text x="235" y="134" fill="#1246f0">ZC</text><text x="241" y="244" fill="#35a045" opacity="0.9">YC</text><text x="409" y="266" fill="#e02828">XC</text></g>`;

const triad = svg`<g font-family="Liberation Sans, Arial, sans-serif" font-size="12">
  <path d="M408 883L447.500 878.500L462.500 890L423 894.500zM408 883V922.500L423 934.500V894.500M423 934.500L462.500 930.500V890" fill="none" stroke="#b0b0b0" />
  <path d="M432.800 887V856h4.600V887z" fill="#0a36d8" /><path d="M435 836l5 20h-10z" fill="#0a36d8" />
  <path d="M462.500 904.200L487 901.500V906L462.500 909z" fill="#d82a2a" /><path d="M504 899.500L487 896V906.500z" fill="#e23a3a" /><path d="M462.500 907.500L487 905v1.500L504 899.500L487 908V906.500L462.500 909z" fill="#8f1a1a" />
  <text x="431.500" y="832" fill="#2048e8">Z</text><text x="402.500" y="887" fill="#3a9a3a">Y</text><text x="508" y="902.500" fill="#d03a3a">X</text></g>`;

@customElement("nx-viewport")
class NxViewport extends LitElement {
  static styles = css`
    :host { display: block; background: linear-gradient(180deg, #b2b3b5 0%, #c4c5c6 22%, #d1d2d3 42%, #dedfe0 62%, #e5e6e8 80%, #e6e8e9 100%); overflow: hidden; }
    svg { display: block; }
  `;
  render() {
    return html`<svg width="1556" height="849" viewBox="328 168 1556 849">${modelDefs}${base}${mid}${head}${csys}${triad}</svg>`;
  }
}

/* ---------- part navigator ---------- */
@customElement("part-navigator")
class PartNavigator extends LitElement {
  static styles = css`
    :host { display: flex; flex-direction: column; width: 296px; box-sizing: border-box; background: #fff; border-right: 1px solid #a4a4a4; padding: 0 9px 0 6px; font-size: 12px; color: #1a1a1a; }
    svg { display: block; flex: none; }
    .title { display: flex; justify-content: space-between; align-items: center; height: 28px; padding: 2px 7px 0 4px; box-sizing: border-box; }
    .max { width: 12px; height: 11px; border: 1px solid #111; border-top-width: 2px; box-sizing: border-box; margin-top: 2px; }
    .table { box-sizing: border-box; height: 738px; border: 1px solid #d6d6d6; padding: 1px; display: flex; flex-direction: column; flex: none; }
    .row { display: grid; grid-template-columns: 200px 24px 24px 1fr; height: 20px; flex: none; box-sizing: border-box; border-bottom: 1px solid #e8e8e8; }
    .row > div { border-right: 1px solid #e8e8e8; display: flex; align-items: center; overflow: hidden; min-width: 0; }
    .row > div:last-child { border-right: 0; }
    .row.alt { background: #fafafa; }
    .row.last { border-bottom: 0; height: 19px; }
    .head { background: #efefef; height: 19px; border-bottom-color: #d0d0d0; }
    .head > div { border-right-color: #d0d0d0; padding: 2px 0 0 6px; box-sizing: border-box; }
    .head > div + div { padding-left: 6px; }
    .sort { margin-left: 17px; }
    .node { padding-left: 5px; }
    .node ui-text { margin-left: 2px; }
    .scroll { display: flex; align-items: center; height: 15px; flex: none; background: #f0f0f0; margin-top: 1px; }
    .scroll .thumb { width: 190px; height: 15px; background: #cbcbcb; }
    .scroll .arr { width: 17px; display: flex; justify-content: center; }
    .scroll .fill { flex: 1; }
    .split { height: 5px; flex: none; box-sizing: border-box; border: 1px solid #a0a0a0; background: #dcdcdc; }
    .sec { display: flex; align-items: center; height: 24px; flex: none; box-sizing: border-box; border-bottom: 2px solid #cfcfcf; color: #0d6487; font-size: 14px; padding: 1px 0 0 6px; gap: 7px; }
    .sec.first { height: 25px; }
  `;
  private row(i: number) {
    const first = [
      html`<div class="node">${twig(false, false, true)}${icHistory}${t("History Modeling Mode", 135)}</div>`,
      html`<div class="node">${twig(true, true, true)}${icViews}${t("Model Views", 73)}</div>`,
      html`<div class="node">${twig(true, true, false)}${icCamera}${t("Cameras", 49)}</div>`,
    ][i];
    return html`<div class="row ${i % 2 ? "alt" : ""} ${i === 34 ? "last" : ""}">${first ?? html`<div></div>`}<div></div><div></div><div></div></div>`;
  }
  render() {
    return html`
      <div class="title">${t("Part Navigator", 82)}<span class="max"></span></div>
      <div class="table">
        <div class="row head">
          <div>${t("Name", 35)}<svg class="sort" width="10" height="6" viewBox="0 0 10 6"><path d="M0 5.500L5 0.500L10 5.500z" fill="#111" /></svg></div>
          <div>${t("C.", 11)}</div><div>${t("U.", 12)}</div><div>${t("Con", 22)}</div>
        </div>
        ${Array.from({ length: 35 }, (_, i) => this.row(i))}
        <div class="scroll">
          <span class="arr"><svg width="7" height="8" viewBox="0 0 7 8" fill="none"><path d="M5.500 0.500L2 4L5.500 7.500" stroke="#444" stroke-width="1.800" /></svg></span>
          <span class="thumb"></span><span class="fill"></span>
          <span class="arr"><svg width="7" height="8" viewBox="0 0 7 8" fill="none"><path d="M1.500 0.500L5 4L1.500 7.500" stroke="#444" stroke-width="1.800" /></svg></span>
        </div>
      </div>
      <div class="split"></div>
      ${[["Search", 44], ["Dependencies", 95], ["Details", 46], ["Preview", 51]].map(([s, w], i) => html`<div class="sec ${i === 0 ? "first" : ""}">
        <svg width="11" height="14" viewBox="0 0 11 14" fill="none"><path d="M3.500 1.500h4l2 2v5l-2 2h-4l-2-2v-5zM5.500 10.500v2h4" stroke="#0d6487" stroke-width="1.200" /></svg>${t(s as string, w as number)}</div>`)}
    `;
  }
}

@customElement("app-root")
class AppRoot extends LitElement {
  static styles = css`
    :host { display: flex; flex-direction: column; width: 1919px; height: 1043px; overflow: hidden; background: #fff; font-family: "Noto Sans", "Open Sans", sans-serif; font-size: 11px; color: #222; }
    svg { display: block; flex: none; }
    .top { position: relative; height: 54px; flex: none; background: linear-gradient(90deg, #00648a 0%, #026d95 45%, #047aa4 85%, #057ca8 100%); color: #fff; display: flex; flex-direction: column; }
    .edge { position: absolute; left: 840px; top: 0; width: 240px; height: 1px; background: linear-gradient(90deg, #0078d7 48px, #e4e4e4 48px); }
    .quick { display: flex; align-items: center; height: 26px; font-size: 12px; }
    .logo { width: 38px; padding-left: 3px; box-sizing: border-box; font-size: 22px; display: flex; align-items: center; height: 26px; }
    .logo ui-text { line-height: 26px; margin-top: -1px; }
    .cell { flex: none; display: flex; justify-content: flex-start; }
    .win { display: flex; align-items: center; gap: 4px; margin-left: 3px; width: 75px; }
    .title { margin-left: 615px; width: 80px; }
    .user { margin-left: 613px; font-family: "Liberation Sans", Arial, sans-serif; font-weight: 700; font-size: 15px; padding-top: 3px; width: 84px; }
    .wctl { display: flex; align-items: center; gap: 12.5px; }
    .menu { display: flex; height: 28px; font-size: 12px; }
    .tab { flex: none; box-sizing: border-box; display: flex; flex-direction: column; align-items: center; padding-top: 8px; height: 26px; border-bottom: 2px solid transparent; }
    .tab.first { margin-right: 4px; }
    .tab.on { color: #ffd469; border-bottom-color: #ffc83d; }
    .spacer { flex: 1; }
    .search { box-sizing: border-box; width: 177px; height: 20px; margin: 4px 10px 0 0; border: 1px solid #777; background: #fff; color: #a2a2a2; font-size: 11px; display: flex; align-items: center; justify-content: space-between; padding-right: 2px; }
    .search ui-text { margin-top: -1px; }
    .hicons { display: flex; gap: 9.5px; align-items: flex-start; padding: 5px 11px 0 0; }
    .ribbon { display: flex; height: 90px; flex: none; box-sizing: border-box; border-bottom: 1px solid #d2d2d2; }
    .group { display: flex; flex-direction: column; flex: none; box-sizing: border-box; }
    .g1 { width: 156px; } .g2 { width: 209px; } .g3 { width: 133px; } .g4 { width: 241px; } .g5 { width: 79px; }
    .sep { width: 1px; margin: 5px 0; background: #d6d6d6; flex: none; }
    .body { display: flex; height: 73px; }
    .foot { display: flex; align-items: center; height: 14px; color: #0d6487; padding-left: 8px; }
    .foot .name { flex: 1; display: flex; justify-content: center; }
    .foot .more { width: 22px; display: flex; justify-content: center; margin-top: -2px; }
    .big { display: flex; flex-direction: column; align-items: center; padding-top: 5px; flex: none; }
    .big .lab { margin-top: 4px; height: 14px; display: flex; justify-content: center; }
    .big .arrow { margin-top: 3px; }
    .b70 { width: 70px; } .b60 { width: 60px; } .b80 { width: 80px; } .b40 { width: 40px; } .b78 { width: 76px; } .b44 { width: 43px; }
    .pad3 { padding-left: 5px; } .pad1 { padding-left: 1px; } .pad2 { padding-left: 1px; }
    .grid9 { display: grid; grid-template-columns: repeat(3, 15px); gap: 8px 10px; padding: 5px 0 0 7px; align-content: start; }
    .ops { display: grid; grid-template-columns: 57px 72px; grid-auto-rows: 34px; padding: 7px 0 0 11px; }
    .op { display: flex; align-items: flex-start; gap: 3px; }
    .op ui-text { margin-top: 7px; }
    .scale { display: flex; flex-direction: column; align-items: center; padding-top: 12px; }
    .scale > ui-text { margin-right: 5px; }
    .field { box-sizing: border-box; width: 59px; height: 20px; border: 1px solid #6a6a6a; display: flex; align-items: center; margin-bottom: 5px; }
    .field ui-text { margin-top: -2px; }
    .opts { margin: 77px 7px 0 auto; }
    .main { display: flex; height: 873px; flex: none; }
    .rail { width: 32px; box-sizing: border-box; border-right: 1px solid #a6a6a6; background: #dcdcdc; display: flex; flex-direction: column; align-items: center; flex: none; }
    .rail .a { height: 51px; padding-top: 5px; box-sizing: border-box; margin-left: -2px; font-size: 13px; }
    .rail .part { margin-left: 4px; height: 31px; }
    .rail .on { width: 30px; height: 46px; box-sizing: border-box; background: #fff; border: 1px solid #a6a6a6; border-right: 0; margin-right: -1px; display: flex; align-items: center; justify-content: center; align-self: flex-end; }
    .rail .web { margin: 17px 0 0 4px; } .rail .clock { margin: 28px 0 0 3px; } .rail .tools { margin: 17px 0 0 4px; }
    .work { display: flex; flex-direction: column; flex: 1; min-width: 0; }
    .files { display: flex; height: 24px; box-sizing: border-box; border-bottom: 2px solid #005f87; font-size: 12px; background: #fff; }
    .file { display: flex; align-items: center; gap: 4px; padding: 0 0 1px 6px; box-sizing: border-box; flex: none; }
    .f1 { width: 142px; } .f2 { width: 225px; } .f3 { width: 133px; }
    .f4 { width: 226px; background: #005f87; color: #e6f1f6; }
    nx-viewport { flex: 1; border-right: 1px solid #d6d6d6; }
    .side { width: 34px; flex: none; display: flex; flex-direction: column; align-items: flex-start; padding: 13px 0 0 5px; box-sizing: border-box; background: #fff; }
    .side .rule { width: 27px; height: 1px; background: #d6d6d6; margin: 9px 0 0 -1px; }
    .side .back { margin: auto 0 5px 3px; }
    .status { height: 23px; flex: none; border-top: 1px solid #a6a6a6; background: #fff; box-sizing: border-box; }
    .strip { height: 3px; flex: none; display: flex; background: linear-gradient(90deg, #dfd3d8 0, #e0d4d8 45px, #ecdcdc 391px, #dfd9de 560px, #ead9df 1225px, #ebdcd2 1276px, #dfd8dc 1480px, #ecdce2 1700px, #e6d8cc 1919px); }
    .s1 { width: 343px; margin-left: 48px; background: #fff; border-top: 1px solid #c4c4c4; box-sizing: border-box; }
    .s2 { width: 48px; margin-left: 836px; background: #f9f9f7; }
  `;

  private big(cls: string, ic: unknown, a: string, aw: number, b = "", bw = 0, arrow = false) {
    return html`<div class="big ${cls}">${ic}<div class="lab">${t(a, aw)}</div>${b ? t(b, bw) : nothing}${arrow ? html`<div class="arrow">${down("#222")}</div>` : nothing}</div>`;
  }
  private foot(name: string, w: number) {
    return html`<div class="foot"><span class="name">${t(name, w)}</span><span class="more">${down("#222")}</span></div>`;
  }

  render() {
    let cursor = 114;
    const cells = quick.map((q) => {
      const gap = (q.x - cursor) / 3;
      cursor = q.x + q.w;
      return html`<div class="cell" style="margin-left:${gap}px">${icon(q.x, 0, q.w, 78, q.body)}</div>`;
    });
    return html`
      <div class="top">
        <div class="edge"></div>
        <div class="quick">
          <div class="logo">${t("NX", 30)}</div>
          ${cells}
          <div class="win">${t("Window", 44)}${down("#fff", 16)}${icon(0, 0, 21, 24, svg`${ln("M2 4h17", W)}<path d="M3 11h16l-8 8z" fill="#fff" />`)}</div>
          <div class="title">${t("NX - Gateway", 78)}</div>
          <div class="user">S</div>
          <div class="wctl">
            ${icon(0, 0, 24, 42, ln("M0 36h24", W, 6))}
            ${icon(0, 0, 39, 42, svg`${ln("M12 17v-9.500h24v16h-8", W, 4)}${ln("M2 17h24v17h-24z M2 20h24", W, 3.5)}`)}
            ${icon(0, 0, 36, 42, ln("M2 5l30 30 M32 5l-30 30", W, 5))}
          </div>
        </div>
        <div class="menu">
          ${tabs.map((m, i) => html`<div class="tab ${m.on ? "on" : ""} ${i === 0 ? "first" : ""}" style="width:${m.cell}px">${t(m.label, m.w)}</div>`)}
          <div class="spacer"></div>
          <div class="search">${t("Type Here to Search", 103)}${icon(690, 94, 54, 54, svg`<circle cx="724" cy="112" r="16" stroke="#333" stroke-width="3" />${ln("M712 123l-17 16q0 5 5 4l17-16z", "#333", 2.5, "#ccc")}`)}</div>
          <div class="hicons">
            ${icon(0, 0, 51, 54, ln("M2 15v-12h13 M36 3h12v12 M2 37v12h13 M36 49h12v-12", W, 3))}
            ${icon(0, 0, 51, 54, ln("M2 36l23-23l23 23", W, 4))}
            ${icon(0, 0, 51, 54, svg`<circle cx="24" cy="26" r="21.500" stroke="#fff" stroke-width="3" />${ln("M17 22q0-8 8-8t8 7q0 4-4 6q-4 3-4 7 M25 38v4", W)}`)}
            ${icon(0, 0, 24, 54, ln("M17 2v36 M17 43v6", W, 5))}
          </div>
        </div>
      </div>

      <div class="ribbon">
        <div class="group g1"><div class="body">${this.big("b70", icWindow, "Window", 44, "", 0, true)}<div class="grid9">${layouts.map(layoutIcon)}</div></div>${this.foot("Window", 44)}</div>
        <div class="sep"></div>
        <div class="group g2"><div class="body">
          <div class="ops">
            <div class="op">${icFit}${t("Fit", 13)}</div><div class="op">${icZoom}${t("Zoom", 31)}</div>
            <div class="op">${icPan}${t("Pan", 19)}</div><div class="op">${icRotate}${t("Rotate", 34)}</div>
          </div>
          <div class="scale"><div class="field">${t("0.2898", 34)}</div>${t("Scale", 26)}</div>
        </div>${this.foot("Operation", 53)}</div>
        <div class="sep"></div>
        <div class="group g3"><div class="body pad3">${this.big("b60", icShow, "Show", 29, "and Hide", 47)}${this.big("b60", icHide, "Immediate", 55, "Hide", 24)}</div>${this.foot("Content", 42)}</div>
        <div class="sep"></div>
        <div class="group g4"><div class="body pad1">${this.big("b80", icPersp, "Perspective", 58)}${this.big("b40", icStyle, "Style", 25, "", 0, true)}${this.big("b78", icBack, "Background", 62, "", 0, true)}${this.big("b44", icMore, "More", 27, "", 0, true)}</div>${this.foot("Display", 38)}</div>
        <div class="sep"></div>
        <div class="group g5"><div class="body pad2">${this.big("b80", icBrush, "Edit Object", 57, "Display", 38)}</div>${this.foot("Object", 34)}</div>
        <div class="sep"></div>
        <div class="opts">${down("#222")}</div>
      </div>

      <div class="main">
        <div class="rail">
          <div class="a">${t("A")}</div>
          <div class="part">${railPart}</div>
          <div class="on">${railBracket}</div>
          <div class="web">${railWeb}</div>
          <div class="clock">${railClock}</div>
          <div class="tools">${railTools}</div>
        </div>
        <part-navigator></part-navigator>
        <div class="work">
          <div class="files">
            <div class="file f1">${compass}${t("Discovery Center", 95)}</div>
            <div class="file f2">${door("#444")}${t("Motor tensioner clamp_step.prt", 177)}</div>
            <div class="file f3">${door("#444")}${t("Clamp_step.prt", 86)}</div>
            <div class="file f4">${door("#bcd3de")}${t("Drill press - Ferm FTB-13M_1.prt", 178)}${icon(0, 0, 36, 30, ln("M9 6l18 18 M27 6l-18 18", W, 7))}</div>
          </div>
          <nx-viewport></nx-viewport>
        </div>
        <div class="side">
          ${side.map((s, i) => html`<div style="padding-top:${s.gap / 3}px">${icon(0, 0, 72, [72, 63, 69, 72, 69, 69, 72, 75][i], s.body)}</div>`)}
          <div class="rule"></div>
          <svg class="back" width="4" height="7" viewBox="0 0 4 7"><path d="M4 0v7L0 3.500z" fill="#111" /></svg>
        </div>
      </div>
      <div class="status"></div>
      <div class="strip"><div class="s1"></div><div class="s2"></div></div>
    `;
  }
}
